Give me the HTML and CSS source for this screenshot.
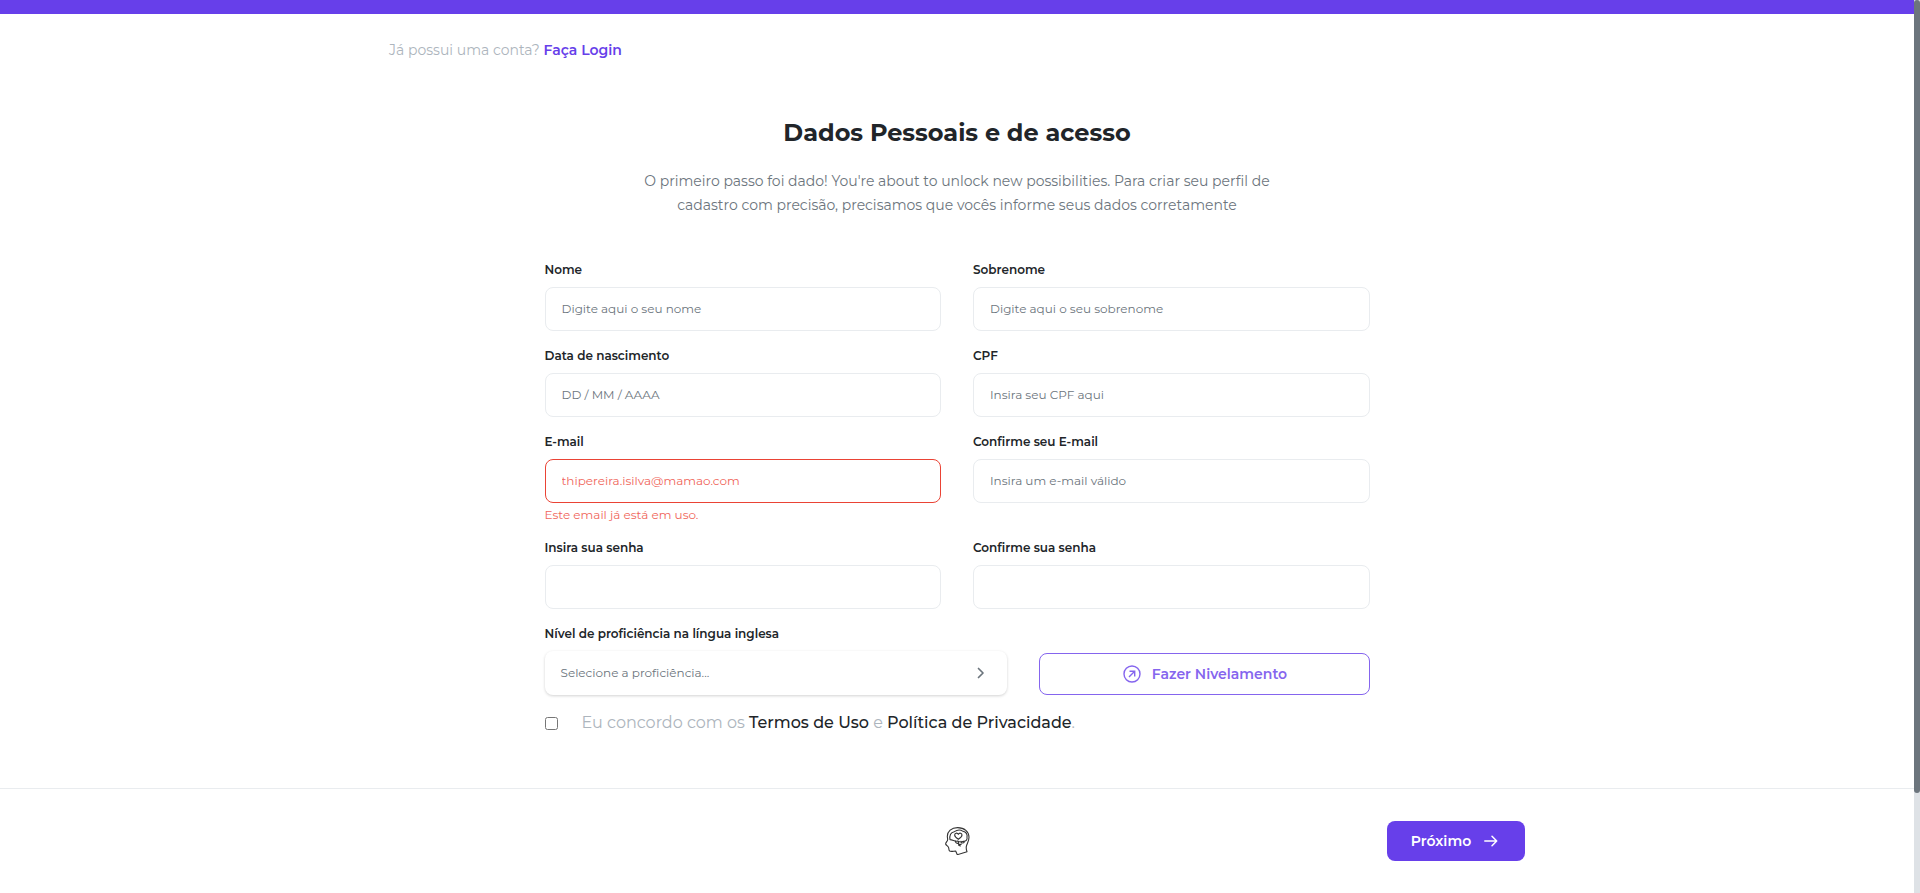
FILE: index.html
```html
<!DOCTYPE html>
<html lang="pt-BR">
<head>
<meta charset="utf-8">
<title>Cadastro</title>
<link rel="stylesheet" href="styles.css">
</head>
<body>
<div class="page">
  <div class="topbar"></div>
  <p class="login">Já possui uma conta? <a class="login-link">Faça Login</a></p>
  <main class="content">
    <h1 class="title">Dados Pessoais e de acesso</h1>
    <p class="subtitle">O primeiro passo foi dado! You're about to unlock new possibilities. Para criar seu perfil de<br>cadastro com precisão, precisamos que vocês informe seus dados corretamente</p>
    <form class="form">
      <div class="row">
        <label class="field">Nome<input class="input" type="text" placeholder="Digite aqui o seu nome"></label>
        <label class="field">Sobrenome<input class="input" type="text" placeholder="Digite aqui o seu sobrenome"></label>
      </div>
      <div class="row">
        <label class="field">Data de nascimento<input class="input" type="text" placeholder="DD / MM / AAAA"></label>
        <label class="field">CPF<input class="input" type="text" placeholder="Insira seu CPF aqui"></label>
      </div>
      <div class="row">
        <label class="field">E-mail<input class="input input-error" type="text" value="thipereira.isilva@mamao.com"><span class="error">Este email já está em uso.</span></label>
        <label class="field">Confirme seu E-mail<input class="input" type="text" placeholder="Insira um e-mail válido"></label>
      </div>
      <div class="row">
        <label class="field">Insira sua senha<input class="input" type="password"></label>
        <label class="field">Confirme sua senha<input class="input" type="password"></label>
      </div>
      <div class="level">
        <div class="level-field">
          <span class="level-label">Nível de proficiência na língua inglesa</span>
          <div class="select">
            <span>Selecione a proficiência...</span>
            <svg class="chevron" viewBox="0 0 8 12"><path d="M1.500 1.500 6 6l-4.500 4.500"/></svg>
          </div>
        </div>
        <button class="outline-btn" type="button">
          <svg class="level-icon" viewBox="0 0 18 18"><circle cx="9" cy="9" r="8"/><path d="M6 12 11.700 6.300M6.500 6.300h5.200v5.200"/></svg>
          Fazer Nivelamento
        </button>
      </div>
      <label class="terms">
        <input class="check" type="checkbox">
        <span>Eu concordo com os <a class="terms-link">Termos de Uso</a> e <a class="terms-link">Política de Privacidade</a>.</span>
      </label>
    </form>
  </main>
  <footer class="footer">
    <svg class="logo" viewBox="33 36 84 84">
      <path d="M46 64C46 49 58 38 77 38c20 0 34 12 34 29 0 12-6 18-8 27-1 6 0 11 2 16L76 119l-5-11c-6 0-13 3-18 0-4-3-1-8-4-12-2-4-7-5-8-9-1-3 6-9 6-13 0-3-1-7-1-10z"/>
      <path d="M54 74c-2-13 3-22 13-24 9-6 19-6 26-1 9 2 14 9 12 17 2 9-4 14-11 13-6 3-12 2-17-1-8 3-14-4-23-4z"/>
      <path d="M79 73c-8-5-11-9-11-13 0-6 8-8 11-2 3-6 11-4 11 2 0 4-3 8-11 13z"/>
      <path d="M70 78c0 5 4 8 9 7m0-5c0 8 5 11 9 7m-1-8c2 6 7 7 10 2M80 86v5l5 2"/>
    </svg>
    <button class="next-btn" type="button">Próximo
      <svg class="arrow" viewBox="0 0 14 12"><path d="M.8 6h11.600M8 1.200 12.700 6 8 10.800"/></svg>
    </button>
  </footer>
</div>
<div class="scrollbar"><div class="thumb"></div></div>
</body>
</html>
```
FILE: styles.css
```css
* { box-sizing: border-box; }

body {
  margin: 0;
  height: 893px;
  display: flex;
  overflow: hidden;
  background: #fff;
  color: #212529;
  font-family: Montserrat, Inter, sans-serif;
}

h1, p { margin: 0; }

.page {
  flex: 1;
  display: flex;
  flex-direction: column;
}

.topbar {
  height: 14px;
  background: #673fea;
}

.login {
  margin: 26px 0 0 389px;
  font-size: 14px;
  line-height: 21px;
  color: #adb5bd;
}

.login-link {
  font-weight: 600;
  color: #673fea;
}

.content {
  width: 825px;
  margin: 54px auto 0;
}

.title {
  font-size: 24px;
  line-height: 36px;
  font-weight: 700;
  text-align: center;
}

.subtitle {
  margin-top: 18px;
  font-size: 14px;
  line-height: 24px;
  text-align: center;
  color: #6c757d;
}

.form { margin-top: 44px; }

.row {
  display: grid;
  grid-template-columns: 1fr 1fr;
  gap: 32px;
  margin-bottom: 16px;
}

.field {
  display: flex;
  flex-direction: column;
  font-size: 12px;
  line-height: 18px;
  font-weight: 600;
}

.input {
  width: 100%;
  height: 44px;
  margin-top: 8px;
  padding: 0 16px 2px;
  border: 1px solid #e9ecef;
  border-radius: 8px;
  outline: 0;
  background: #fff;
  font: 400 12px Montserrat, Inter, sans-serif;
}

.input::placeholder { color: #6c757d; opacity: 1; }

.input-error {
  border-color: #ea4335;
  color: #f0665b;
}

.error {
  margin-top: 4px;
  height: 16px;
  line-height: 16px;
  font-weight: 400;
  color: #f0665b;
}

.level {
  display: flex;
  align-items: flex-end;
  gap: 32px;
}

.level-field { width: 462px; }

.level-label {
  display: block;
  font-size: 12px;
  line-height: 18px;
  font-weight: 600;
}

.select {
  height: 44px;
  margin-top: 8px;
  padding: 0 22px 1px 16px;
  display: flex;
  align-items: center;
  justify-content: space-between;
  border-radius: 8px;
  box-shadow: 0 1px 3px rgba(0, 0, 0, .18);
  font-size: 12px;
  color: #6c757d;
}

.chevron {
  width: 8px;
  height: 12px;
  fill: none;
  stroke: #6c757d;
  stroke-width: 1.7;
  stroke-linecap: round;
  stroke-linejoin: round;
}

.outline-btn {
  flex: 1;
  height: 42px;
  display: flex;
  align-items: center;
  justify-content: center;
  gap: 11px;
  padding: 0 0 0 2px;
  border: 1px solid #8565ee;
  border-radius: 8px;
  background: #fff;
  color: #8565ee;
  font: 600 14px Montserrat, Inter, sans-serif;
}

.level-icon {
  width: 18px;
  height: 18px;
  fill: none;
  stroke: #8565ee;
  stroke-width: 1.4;
}

.terms {
  display: flex;
  align-items: center;
  gap: 24px;
  margin-top: 16px;
  font-size: 16px;
  line-height: 24px;
  color: #adb5bd;
}

.check {
  width: 13px;
  height: 13px;
  margin: 0;
}

.terms-link {
  font-weight: 500;
  color: #212529;
}

.footer {
  margin-top: auto;
  height: 105px;
  border-top: 1px solid #e9ecef;
  padding: 0 389px;
  display: grid;
  grid-template-columns: 1fr auto 1fr;
  align-items: center;
}

.logo {
  grid-column: 2;
  width: 28px;
  height: 28px;
  fill: none;
  stroke: #333;
  stroke-width: 3.3;
  stroke-linecap: round;
  stroke-linejoin: round;
}

.next-btn {
  justify-self: end;
  width: 138px;
  height: 40px;
  display: flex;
  align-items: center;
  justify-content: center;
  gap: 13px;
  padding: 0 3px 0 0;
  border: 0;
  border-radius: 8px;
  background: #673fea;
  color: #fff;
  font: 600 14px Montserrat, Inter, sans-serif;
}

.arrow {
  width: 14px;
  height: 12px;
  fill: none;
  stroke: #fff;
  stroke-width: 1.5;
  stroke-linecap: round;
  stroke-linejoin: round;
}

.scrollbar {
  width: 6px;
  background: #dee2e6;
}

.thumb {
  height: 793px;
  border-radius: 3px;
  background: #6c757d;
}
```
